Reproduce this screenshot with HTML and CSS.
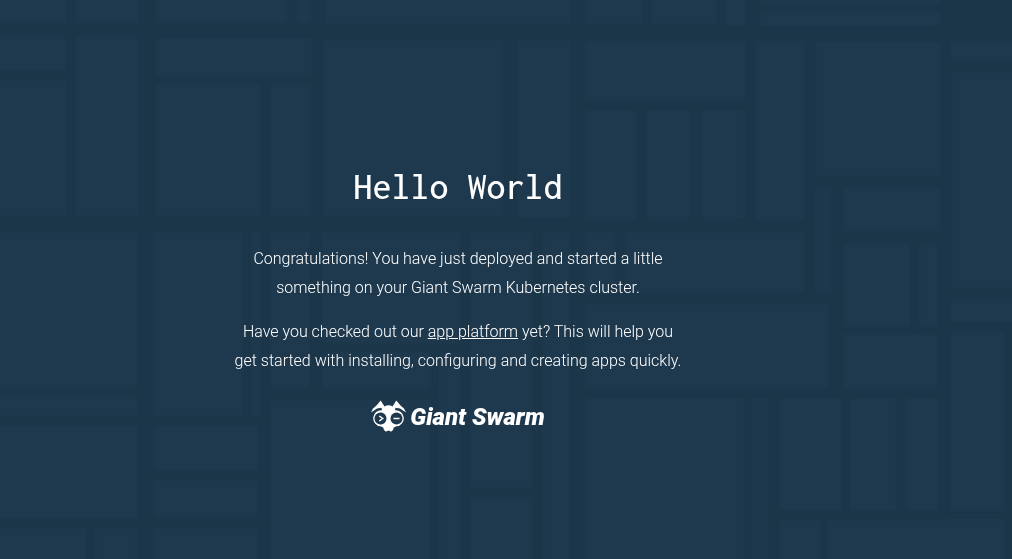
FILE: index.html
```html
<!DOCTYPE html>
<html lang="en">
<head>
<meta charset="utf-8">
<meta name="viewport" content="width=device-width, initial-scale=1">
<title>Hello World</title>
<link rel="stylesheet" href="styles.css">
</head>
<body>
<svg class="backdrop" viewBox="0 0 1012 559" preserveAspectRatio="xMidYMid slice" aria-hidden="true">
  <defs><filter id="soft" x="0" y="0" width="1" height="1" color-interpolation-filters="sRGB"><feGaussianBlur stdDeviation="1"/></filter></defs>
  <path filter="url(#soft)" d="M-9-9H67V23H-9zM76-9H139V23H76zM155-9H287V23H155zM297-9H311V23H297zM325-9H571V24H325zM585-9H643V24H585zM651-9H717V25H651zM725-9H746V26H725zM760-9H940V4H760zM760 13H940V26H760z
  M-9 37H67V70H-9zM-9 79H67V217H-9zM76 37H139V217H76zM155 38H312V75H155zM155 84H261V217H155zM270 84H311V217H270zM324 39H503V217H324zM517 40H571V218H517zM585 41H746V100H585zM585 110H637V219H585zM646 110H691V219H646zM701 110H745V219H701zM755 41H805V219H755zM816 42H940V177H816zM950 41H1020V60H950zM952 71H1020V289H952z
  M815 188H831V292H815zM843 187H940V231H843zM843 244H910V327H843zM919 244H938V327H919zM843 334H938V389H843zM950 300H1020V322H950zM950 331H1004V511H950z
  M-9 231H138V387H-9zM-9 397H138V416H-9zM-9 426H138V518H-9zM-9 527H86V570H-9zM95 527H137V570H95zM153 231H243V417H153zM251 231H261V417H251zM153 426H259V470H153zM153 479H258V517H153zM153 527H258V570H153z
  M270 231H310V389H270zM322 232H460V343H322zM322 352H431V389H322zM270 399H430V570H270zM439 352H460V570H439zM470 232H532V488H470zM470 497H532V570H470zM543 232H570V570H543zM585 232H615V294H585zM625 231H804V292H625zM585 303H828V387H585z
  M585 398H744V570H585zM752 398H768V570H752zM780 398H842V510H780zM850 398H896V510H850zM905 398H939V510H905zM780 519H820V570H780zM827 519H1004V570H827z"/>
</svg>
<main class="page">
  <h1 class="title">Hello World</h1>
  <p class="text">Congratulations! You have just deployed and started a little something on your Giant Swarm Kubernetes cluster.</p>
  <p class="text">Have you checked out our <a class="link" href="#apps">app platform</a> yet? This will help you get started with installing, configuring and creating apps quickly.</p>
  <div class="brand">
    <svg class="brand-mark" viewBox="0 0 35 33" aria-hidden="true">
      <path fill="#fff" d="M0 12.500L2 8.500L5.500 5.500L9.700 0.500L13.500 6.500Q17.500 4 21.500 6.500L25.300 0.500L29.500 5.500L33 8.500L35 12.500L29 8.500L24.500 7.800L24 10.300A7.800 7.800 0 0 1 25.500 26.300L22.800 27.500L22 30L20 31.800L18.600 30.800H16.400L15 31.800L13 30L12.200 27.500L9.500 26.300A7.800 7.800 0 0 1 11 10.300L10.500 7.800L6 8.500z"/>
      <g class="eyes"><circle cx="9.500" cy="18.500" r="6"/><circle cx="25.500" cy="18.500" r="6"/></g>
      <path class="marks" d="M8.300 16L11.700 18.500L8.300 21M22.500 18.500H28.500"/>
    </svg>
    <span class="brand-name">Giant Swarm</span>
  </div>
</main>
</body>
</html>
```
FILE: styles.css
```css
body {
  margin: 0;
  background: #1b3549;
  color: #fff;
  font-family: Roboto, "Liberation Sans", sans-serif;
}

.backdrop {
  position: fixed;
  inset: 0;
  width: 100%;
  height: 100%;
  z-index: -1;
  fill: #1e394e;
}

.page {
  display: flex;
  flex-direction: column;
  align-items: center;
  padding: 164px 96px 40px 0;
  text-align: center;
}

.title {
  margin: 0 0 36px;
  font: 500 38px/44px Inconsolata, "DejaVu Sans Mono", monospace;
}

.text {
  max-width: 456px;
  margin: 0 0 15px;
  font-size: 16px;
  font-weight: 300;
  line-height: 29px;
}

.link {
  color: inherit;
  text-underline-offset: 1px;
}

.brand {
  display: flex;
  align-items: center;
  gap: 4px;
  margin-top: 10px;
}

.brand-mark {
  width: 35px;
  height: 33px;
}

.eyes {
  fill: #1e394e;
}

.marks {
  fill: none;
  stroke: #fff;
  stroke-width: 1.5;
}

.brand-name {
  font-size: 24px;
  font-style: italic;
  font-weight: 900;
  line-height: 32px;
}
```
